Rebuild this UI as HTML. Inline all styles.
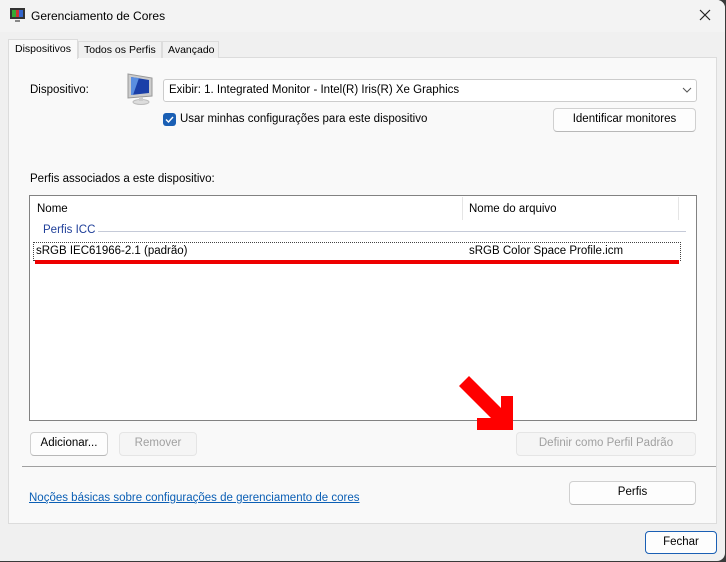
<!DOCTYPE html>
<html><head><meta charset="utf-8"><style>
*{box-sizing:border-box;margin:0;padding:0}
body{width:726px;height:562px;overflow:hidden;background:#3a3a3a;font-family:"Liberation Sans",sans-serif;font-size:11.5px;color:#000;position:relative}
.win{position:absolute;left:0;top:0;width:725px;height:561px;background:#f0f0f0;border-radius:0 8px 8px 0;overflow:hidden}
.a{position:absolute;white-space:nowrap}
.btn{position:absolute;background:#fdfdfd;border:1px solid #d0d0d0;border-bottom-color:#b8b8b8;border-radius:4px;text-align:center;line-height:21px}
.dis{background:#f5f5f5;border-color:#e5e5e5;color:#a0a0a0}
</style></head><body>
<div class="win">
<div class="a" style="left:0;top:0;width:725px;height:32px;background:#f3f3f3"></div>
<svg class="a" style="left:10px;top:8px" width="15" height="15"><rect x="0" y="0" width="15" height="11" fill="#333"/><rect x="2" y="2" width="11" height="7" fill="#c33"/><rect x="2" y="2" width="4" height="7" fill="#3a3"/><rect x="9" y="2" width="4" height="7" fill="#36c"/><rect x="5" y="12" width="5" height="2" fill="#888"/></svg>
<div class="a" style="left:31px;top:9px;font-size:12px">Gerenciamento de Cores</div>
<svg class="a" style="left:699px;top:9px" width="12" height="12"><path d="M1 1 L11 11 M11 1 L1 11" stroke="#222" stroke-width="1.2"/></svg>
<div class="a" style="left:8px;top:57px;width:709px;height:467px;background:#f9f9f9;border:1px solid #dcdcdc"></div>
<div class="a" style="left:8px;top:39px;width:70px;height:20px;background:#f9f9f9;border:1px solid #dcdcdc;border-bottom:none;padding:3px 0 0 6px;font-size:10.5px">Dispositivos</div>
<div class="a" style="left:78px;top:41px;width:84px;height:17px;background:#f0f0f0;border:1px solid #dcdcdc;border-bottom:none;padding:2px 0 0 5px;font-size:10.5px">Todos os Perfis</div>
<div class="a" style="left:162px;top:41px;width:57px;height:17px;background:#f0f0f0;border:1px solid #dcdcdc;border-bottom:none;padding:2px 0 0 5px;font-size:10.5px">Avançado</div>
<div class="a" style="left:30px;top:84px">Dispositivo:</div>
<svg class="a" style="left:125px;top:72px" width="30" height="34"><path d="M3 2 L27 6 L27 24 L3 26 Z" fill="#ccc" stroke="#999"/><path d="M6 5 L24 8 L24 21 L6 23 Z" fill="#1a3fa8"/><path d="M6 5 L14 6 L8 23 L6 23Z" fill="#5a8ee0"/><ellipse cx="16" cy="30" rx="8" ry="2.5" fill="#ddd" stroke="#bbb"/><rect x="14" y="25" width="4" height="4" fill="#ccc"/></svg>
<div class="a" style="left:163px;top:79px;width:534px;height:23px;background:#fff;border:1px solid #ccc;border-radius:3px;padding:4px 0 0 5px">Exibir: 1. Integrated Monitor - Intel(R) Iris(R) Xe Graphics</div>
<svg class="a" style="left:682px;top:87px" width="10" height="6"><path d="M1 1 L5 5 L9 1" fill="none" stroke="#555"/></svg>
<div class="a" style="left:163px;top:113px;width:13px;height:13px;background:#1a5fb4;border-radius:3px"></div>
<svg class="a" style="left:163px;top:113px" width="13" height="13"><path d="M3 6.5 L5.5 9 L10 4" fill="none" stroke="#fff" stroke-width="1.4"/></svg>
<div class="a" style="left:180px;top:113px">Usar minhas configurações para este dispositivo</div>
<div class="btn" style="left:553px;top:108px;width:143px;height:24px">Identificar monitores</div>
<div class="a" style="left:30px;top:173px">Perfis associados a este dispositivo:</div>
<div class="a" style="left:29px;top:195px;width:668px;height:226px;background:#fff;border:1px solid #828282"></div>
<div class="a" style="left:37px;top:203px">Nome</div>
<div class="a" style="left:462px;top:197px;width:1px;height:23px;background:#e5e5e5"></div>
<div class="a" style="left:678px;top:197px;width:1px;height:23px;background:#e5e5e5"></div>
<div class="a" style="left:469px;top:203px">Nome do arquivo</div>
<div class="a" style="left:43px;top:224px;color:#1f3f99">Perfis ICC</div>
<div class="a" style="left:98px;top:231px;width:588px;height:1px;background:#c5cad8"></div>
<div class="a" style="left:33px;top:242px;width:648px;height:19px;border:1px dotted #444"></div>
<div class="a" style="left:36px;top:245px">sRGB IEC61966-2.1 (padrão)</div>
<div class="a" style="left:469px;top:245px">sRGB Color Space Profile.icm</div>
<div class="a" style="left:35px;top:260px;width:644px;height:4px;background:#e00"></div>
<div class="btn" style="left:30px;top:432px;width:78px;height:24px">Adicionar...</div>
<div class="btn dis" style="left:119px;top:432px;width:78px;height:24px">Remover</div>
<div class="btn dis" style="left:516px;top:432px;width:180px;height:24px">Definir como Perfil Padrão</div>
<svg class="a" style="left:455px;top:372px" width="62" height="62"><path d="M4 14 L14 4 L46 36 L46 24 L58 24 L58 58 L22 58 L22 46 L36 46 Z" fill="#f00"/></svg>
<div class="a" style="left:22px;top:466px;width:694px;height:1px;background:#a0a0a0"></div>
<div class="a" style="left:29px;top:492px;color:#0b5fb5;text-decoration:underline">Noções básicas sobre configurações de gerenciamento de cores</div>
<div class="btn" style="left:569px;top:481px;width:127px;height:24px">Perfis</div>
<div class="btn" style="left:645px;top:531px;width:72px;height:23px;border:1px solid #1a5fb4">Fechar</div>
</div>
</body></html>
